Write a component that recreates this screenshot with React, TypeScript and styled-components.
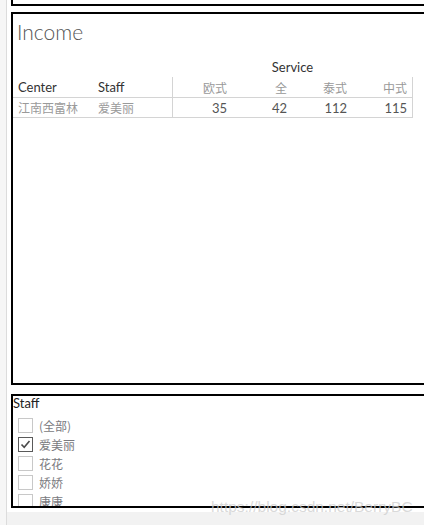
import React from "react";
import styled, { createGlobalStyle } from "styled-components";

const GlobalStyle = createGlobalStyle`
  html, body {
    margin: 0;
    padding: 0;
    background: #ffffff;
    overflow: hidden;
  }
  body {
    font-family: "Lato", "Noto Sans CJK SC", sans-serif;
  }
`;

const LATIN = `"Lato", "Noto Sans CJK SC", sans-serif`;
const CJK = `"Noto Sans CJK SC", "Lato", sans-serif`;

const Page = styled.div`
  position: relative;
  display: flex;
  width: 424px;
  height: 525px;
  overflow: hidden;
`;

const LeftRail = styled.div`
  width: 6px;
  flex: 0 0 6px;
  background: #f6f6f6;
  border-right: 1px solid #dcdcdc;
`;

const Main = styled.div`
  flex: 1;
  min-width: 0;
  display: flex;
  flex-direction: column;
`;

const TopPanel = styled.div`
  height: 4px;
  margin-left: 4px;
  margin-bottom: 6px;
  border-left: 2px solid #000;
  border-bottom: 2px solid #000;
`;

const IncomePanel = styled.div`
  box-sizing: border-box;
  height: 373px;
  margin-left: 4px;
  margin-right: -20px;
  border: 2px solid #000;
  border-right: none;
  display: flex;
  flex-direction: column;
`;

const Title = styled.div`
  margin: 5px 0 0 4px;
  font-family: ${LATIN};
  font-weight: 300;
  font-size: 21px;
  line-height: 25px;
  color: #555;
`;

const Grid = styled.div`
  margin-top: 13px;
  display: grid;
  grid-template-columns: 80px 79px 60px 60px 60px 61px;
  grid-template-rows: 20px 21px 20px;
  width: 400px;
`;

const GroupHeader = styled.div`
  grid-column: 3 / 7;
  display: flex;
  align-items: center;
  justify-content: center;
  font-family: ${LATIN};
  font-size: 13px;
  color: #333;
`;

const Cell = styled.div<{ $align?: "left" | "right"; $first?: boolean; $last?: boolean; $cjk?: boolean; $tone?: string }>`
  box-sizing: border-box;
  display: flex;
  align-items: center;
  justify-content: ${(p) => (p.$align === "right" ? "flex-end" : "flex-start")};
  padding: ${(p) => (p.$align === "right" ? "0 5px 0 0" : "0 0 0 5px")};
  border-bottom: 1px solid #d4d4d4;
  border-left: ${(p) => (p.$first ? "1px solid #d4d4d4" : "none")};
  border-right: ${(p) => (p.$last ? "1px solid #d4d4d4" : "none")};
  font-family: ${(p) => (p.$cjk ? CJK : LATIN)};
  font-size: ${(p) => (p.$cjk ? "12px" : "13px")};
  color: ${(p) => p.$tone || "#333"};
  white-space: nowrap;
`;

const StaffPanel = styled.div`
  box-sizing: border-box;
  height: 114px;
  margin-left: 4px;
  margin-right: -20px;
  margin-top: 9px;
  border: 2px solid #000;
  border-right: none;
  overflow: hidden;
`;

const FilterLabel = styled.div`
  font-family: ${LATIN};
  font-size: 13px;
  line-height: 14px;
  color: #222;
`;

const List = styled.div`
  margin-top: 6px;
  padding-left: 5px;
  display: flex;
  flex-direction: column;
`;

const Row = styled.div`
  height: 19px;
  display: flex;
  align-items: center;
  gap: 6px;
`;

const Box = styled.span<{ $checked?: boolean }>`
  box-sizing: border-box;
  width: 15px;
  height: 15px;
  flex: 0 0 15px;
  border: 1px solid ${(p) => (p.$checked ? "#5a5a5a" : "#c8c8c8")};
  background: #fff;
  display: flex;
  align-items: center;
  justify-content: center;
`;

const RowText = styled.span`
  font-family: ${CJK};
  font-size: 12px;
  color: #7a7a80;
`;

const Footer = styled.div`
  flex: 1;
  margin-top: 4px;
  background: #f2f2f2;
`;

const Watermark = styled.div`
  position: absolute;
  left: 211px;
  top: 498px;
  font-family: "Liberation Sans", Arial, sans-serif;
  font-size: 15.5px;
  color: rgba(205, 205, 205, 0.75);
  white-space: nowrap;
  pointer-events: none;
`;

const Check = () => (
  <svg width="11" height="11" viewBox="0 0 11 11">
    <path d="M1.5 5.5 L4.2 8.3 L9.5 2" fill="none" stroke="#4a4a4a" strokeWidth="1.6" />
  </svg>
);

const columns = ["欧式", "全", "泰式", "中式"];
const values = [35, 42, 112, 115];
const staff = [
  { name: "(全部)", checked: false },
  { name: "爱美丽", checked: true },
  { name: "花花", checked: false },
  { name: "娇娇", checked: false },
  { name: "康康", checked: false },
];

export default function App() {
  return (
    <>
      <GlobalStyle />
      <Page>
        <LeftRail />
        <Main>
          <TopPanel />
          <IncomePanel>
            <Title>Income</Title>
            <Grid>
              <div />
              <div />
              <GroupHeader>Service</GroupHeader>
              <Cell>Center</Cell>
              <Cell>Staff</Cell>
              {columns.map((c, i) => (
                <Cell key={c} $align="right" $cjk $tone="#999" $first={i === 0} $last={i === columns.length - 1}>
                  {c}
                </Cell>
              ))}
              <Cell $cjk $tone="#9a9a9a">江南西富林</Cell>
              <Cell $cjk $tone="#9a9a9a">爱美丽</Cell>
              {values.map((v, i) => (
                <Cell key={i} $align="right" $tone="#555" $first={i === 0} $last={i === values.length - 1}>
                  {v}
                </Cell>
              ))}
            </Grid>
          </IncomePanel>
          <StaffPanel>
            <FilterLabel>Staff</FilterLabel>
            <List>
              {staff.map((s) => (
                <Row key={s.name}>
                  <Box $checked={s.checked}>{s.checked && <Check />}</Box>
                  <RowText>{s.name}</RowText>
                </Row>
              ))}
            </List>
          </StaffPanel>
          <Footer />
        </Main>
        <Watermark>https://blog.csdn.net/BerryBC</Watermark>
      </Page>
    </>
  );
}
